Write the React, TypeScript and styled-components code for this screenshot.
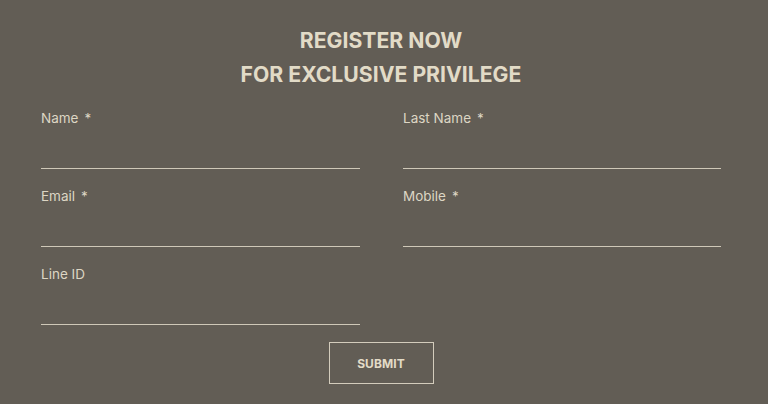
import React from "react";
import styled, { createGlobalStyle } from "styled-components";

const Global = createGlobalStyle`
  html, body { margin: 0; padding: 0; background: #625d55; }
  body { font-family: Inter, "Open Sans", sans-serif; }
`;

const Page = styled.div`
  width: 768px;
  height: 404px;
  background: #625d55;
  box-sizing: border-box;
  padding: 23px 6px 0 0;
  display: flex;
  flex-direction: column;
  align-items: center;
`;

const Title = styled.h1`
  margin: 0;
  text-align: center;
  color: #e2dbc7;
  font-size: 21.2px;
  font-weight: 700;
  line-height: 34px;
`;

const Form = styled.form`
  width: 680px;
  margin-top: 19px;
  display: grid;
  grid-template-columns: 319px 318px;
  column-gap: 43px;
  row-gap: 19px;
`;

const Field = styled.label`
  display: flex;
  flex-direction: column;
`;

const Label = styled.span`
  color: #ddd6c4;
  font-size: 13.5px;
  line-height: 16px;
  height: 16px;
`;

const Star = styled.span`
  margin-left: 6px;
`;

const Input = styled.input`
  margin-top: 26px;
  height: 16px;
  background: transparent;
  border: none;
  border-bottom: 1px solid #cfc8b8;
  outline: none;
  padding: 0;
  color: #e2dbc7;
  font-family: inherit;
`;

const Submit = styled.button`
  margin-top: 17px;
  width: 105px;
  height: 42px;
  background: transparent;
  border: 1px solid #d3ccbc;
  color: #e2dbc7;
  font-family: Inter, sans-serif;
  font-weight: 700;
  font-size: 12px;
  letter-spacing: 0.1px;
`;

const fields = [
  { label: "Name", req: true },
  { label: "Last Name", req: true },
  { label: "Email", req: true },
  { label: "Mobile", req: true },
  { label: "Line ID", req: false },
];

export default function App() {
  return (
    <>
      <Global />
      <Page>
        <Title>
          REGISTER NOW
          <br />
          FOR EXCLUSIVE PRIVILEGE
        </Title>
        <Form onSubmit={(e) => e.preventDefault()}>
          {fields.map((f) => (
            <Field key={f.label}>
              <Label>
                {f.label}
                {f.req && <Star>*</Star>}
              </Label>
              <Input />
            </Field>
          ))}
        </Form>
        <Submit type="button">SUBMIT</Submit>
      </Page>
    </>
  );
}
